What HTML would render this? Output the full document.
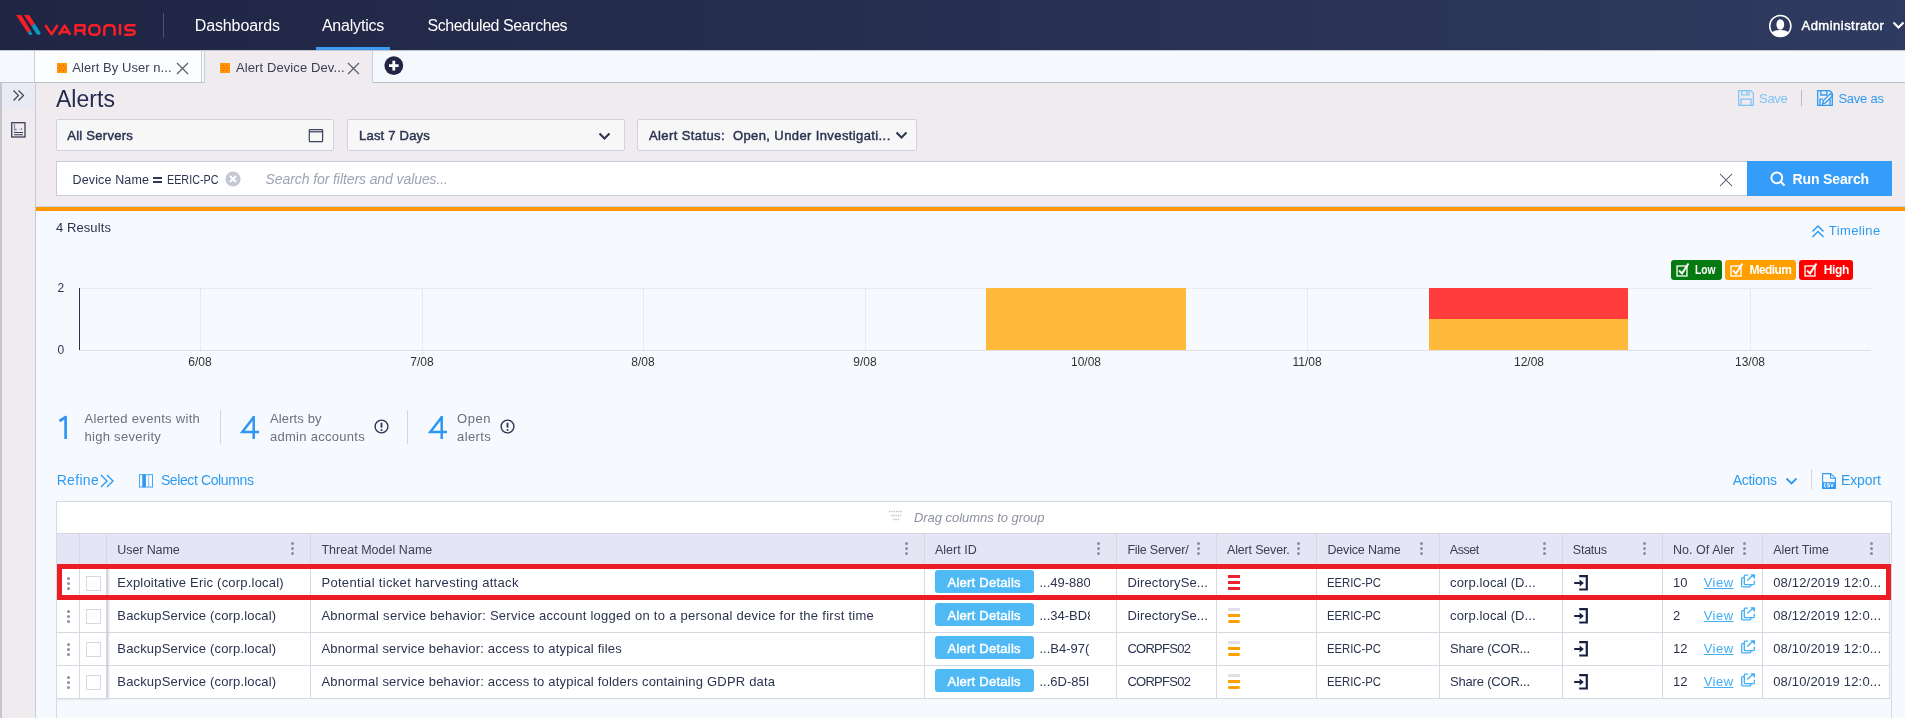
<!DOCTYPE html>
<html><head><meta charset="utf-8">
<style>
*{box-sizing:border-box;margin:0;padding:0}
html,body{width:1905px;height:718px;overflow:hidden;background:#efebef;font-family:"Liberation Sans",sans-serif;color:#2b3350;position:relative}
.a{position:absolute}
#root{position:absolute;left:0;top:0;width:1905px;height:718px;overflow:hidden;will-change:transform}
.t{white-space:nowrap;line-height:normal}
</style></head><body><div id="root">
<div class="a" style="left:0px;top:0px;width:1905px;height:50px;background:linear-gradient(90deg,#1f2543 0%,#2f3a60 100%)"></div>
<svg class="a" style="left:0;top:0" width="150" height="50" viewBox="0 0 150 50">
  <polygon points="16,15 21.2,15 30.2,29.8 28,33.2" fill="#fa1e26"/>
  <polygon points="28,33.2 30.2,29.8 32.4,34.8 29,34.8" fill="#0f97bd"/>
  <polygon points="24,15 29.2,15 34.5,23.2 31.7,26.5" fill="#fa1e26"/>
  <polygon points="31.7,26.5 34.5,23.2 40.3,32.3 40.2,34.8 37,34.8" fill="#0f97bd"/>
  <g fill="none" stroke="#fa1e26" stroke-width="2.5" stroke-linejoin="round">
    <path d="M45.3,25 L51.5,34.3 L57.7,25"/>
    <path d="M58.8,34.8 L64.6,25.6 L70.4,34.8 M60.3,32.1 H69"/>
    <path d="M75.5,35.6 V25.3 H84.5 V30.4 H75.5 M82.2,30.4 L85.2,35.4"/>
    <rect x="89.3" y="25.3" width="10.2" height="9.4" rx="3.6"/>
    <path d="M104.3,35.8 V29.5 Q104.3,25.3 108.3,25.3 H110.6 Q114.6,25.3 114.6,29.5 V35.8"/>
    <path d="M120,24 V35"/>
    <path d="M135.6,25.3 H128.6 Q125.4,25.3 125.4,27.9 Q125.4,30.3 128.6,30.3 H131.6 Q134.6,30.3 134.6,32.5 Q134.6,34.7 131.6,34.7 H124.3"/>
  </g>
</svg>
<div class="a" style="left:163px;top:13px;width:1px;height:25px;background:#4a5272"></div>
<div id="nav1" class="a t" style="left:194.7px;top:17px;font-size:16px;letter-spacing:-0.111px;color:#fff">Dashboards</div>
<div id="nav2" class="a t" style="left:321.9px;top:17px;font-size:16px;letter-spacing:-0.2px;color:#fff">Analytics</div>
<div class="a" style="left:316px;top:47px;width:74px;height:3px;background:#3a9bf0"></div>
<div id="nav3" class="a t" style="left:427.4px;top:17px;font-size:16px;letter-spacing:-0.437px;color:#fff">Scheduled Searches</div>
<svg class="a" style="left:1768px;top:14px" width="24" height="24" viewBox="0 0 24 24"><circle cx="12.3" cy="12" r="10.6" fill="none" stroke="#fff" stroke-width="1.5"/><ellipse cx="12.3" cy="10.5" rx="3.9" ry="5.2" fill="#fff"/><path d="M3.8 19.2 Q5.5 16 12.3 16 Q19.1 16 20.8 19.2 Q17.5 22.8 12.3 22.8 Q7.1 22.8 3.8 19.2Z" fill="#fff"/></svg>
<div id="admin" class="a t" style="left:1801.5px;top:18px;font-size:13px;letter-spacing:0.484px;color:#fff;-webkit-text-stroke:0.45px #fff">Administrator</div>
<svg class="a" style="left:1892px;top:21px" width="13" height="9" viewBox="0 0 13 9"><path d="M1.5 1.5 L6.5 6.5 L11.5 1.5" fill="none" stroke="#fff" stroke-width="2.2"/></svg>
<div class="a" style="left:0px;top:50px;width:1905px;height:33px;background:#f5f9fe;border-top:1px solid #c3c6cd;border-bottom:1px solid #bcc0ca"></div>
<div class="a" style="left:34px;top:51px;width:168px;height:32px;background:#fcfdff;border-left:1px solid #c9ced8;border-right:1px solid #c9ced8;border-bottom:1px solid #bcc0ca"></div>
<div class="a" style="left:204px;top:51px;width:169px;height:32px;background:#efebef;border-left:1px solid #c9ced8;border-right:1px solid #c9ced8"></div>
<svg class="a" style="left:57px;top:63px" width="10" height="10" viewBox="0 0 10 10"><rect width="10" height="10" fill="#ff9800"/><g fill="#e8323a"><circle cx="3" cy="2.5" r="0.6"/><circle cx="6.5" cy="2.5" r="0.6"/><circle cx="2" cy="5" r="0.6"/><circle cx="4.5" cy="5" r="0.6"/><circle cx="7.5" cy="5" r="0.6"/><circle cx="3" cy="7.5" r="0.6"/><circle cx="6.5" cy="7.5" r="0.6"/></g></svg>
<div id="tab1" class="a t" style="left:72.3px;top:60px;font-size:13px;letter-spacing:0.059px;color:#3a4058">Alert By User n...</div>
<svg class="a" style="left:176px;top:62px" width="13" height="13" viewBox="0 0 13 13"><path d="M1 1L12 12M12 1L1 12" stroke="#5a5f6e" stroke-width="1.2"/></svg>
<svg class="a" style="left:220px;top:63px" width="10" height="10" viewBox="0 0 10 10"><rect width="10" height="10" fill="#ff9800"/><g fill="#e8323a"><circle cx="3" cy="2.5" r="0.6"/><circle cx="6.5" cy="2.5" r="0.6"/><circle cx="2" cy="5" r="0.6"/><circle cx="4.5" cy="5" r="0.6"/><circle cx="7.5" cy="5" r="0.6"/><circle cx="3" cy="7.5" r="0.6"/><circle cx="6.5" cy="7.5" r="0.6"/></g></svg>
<div id="tab2" class="a t" style="left:235.9px;top:60px;font-size:13px;letter-spacing:0.111px;color:#3a4058">Alert Device Dev...</div>
<svg class="a" style="left:347px;top:62px" width="13" height="13" viewBox="0 0 13 13"><path d="M1 1L12 12M12 1L1 12" stroke="#5a5f6e" stroke-width="1.2"/></svg>
<svg class="a" style="left:384px;top:56px" width="20" height="20" viewBox="0 0 20 20"><circle cx="9.8" cy="9.6" r="9.4" fill="#1f2543"/><path d="M9.8 4.8V14.4M5 9.6H14.6" stroke="#fff" stroke-width="2.8"/></svg>
<div class="a" style="left:0px;top:83px;width:36px;height:635px;background:#efebef;border-right:1px solid #c6cad6"></div>
<div class="a" style="left:0px;top:83px;width:2px;height:635px;background:#c3c6cc"></div>
<div class="a" style="left:2px;top:83px;width:33px;height:27px;background:#e9eaf3"></div>
<svg class="a" style="left:12px;top:89px" width="14" height="14" viewBox="0 0 14 14"><path d="M1.5 1.5L6.5 6.5L1.5 11.5M6.5 1.5L11.5 6.5L6.5 11.5" fill="none" stroke="#3a4058" stroke-width="1.2"/></svg>
<svg class="a" style="left:11px;top:122px" width="15" height="16" viewBox="0 0 15 16"><rect x="0.7" y="0.7" width="13.3" height="14.3" fill="none" stroke="#3a4058" stroke-width="1.3"/><path d="M3.5 2V8H5V6.5 M8.5 7.5V8 M10.5 6V8" fill="none" stroke="#8a8e9a" stroke-width="1.2"/><path d="M3 10.5H12M3 12.8H12" stroke="#3a4058" stroke-width="1.1"/></svg>
<div id="title" class="a t" style="left:55.9px;top:86px;font-size:23px;letter-spacing:0.08px;color:#232c4d">Alerts</div>
<svg class="a" style="left:1738px;top:90px" width="16" height="16" viewBox="0 0 16 16"><path d="M0.7 0.7H12.8L15.3 3.2V15.3H0.7Z M3.8 0.7V5H11V0.7 M8.8 1.6V4 M3 15.3V9.2H13V15.3" fill="none" stroke="#7cc3f7" stroke-width="1.2"/></svg>
<div id="save" class="a t" style="left:1759px;top:91px;font-size:13px;letter-spacing:-0.267px;color:#7cc3f7">Save</div>
<div class="a" style="left:1801px;top:90px;width:1px;height:16px;background:#b9bcc6"></div>
<svg class="a" style="left:1817px;top:90px" width="17" height="16" viewBox="0 0 17 16"><path d="M0.7 0.7H12.8L15.3 3.2V15.3H0.7Z M3.8 0.7V5H9.8V0.7 M3 15.3V9.2H6 M13 8.5V15.3" fill="none" stroke="#2e9bf3" stroke-width="1.3"/><path d="M5.6 14.2 L6.4 10.6 L13.4 3.6 L15.6 5.8 L8.6 12.8 Z" fill="#efebef" stroke="#2e9bf3" stroke-width="1.3"/></svg>
<div id="saveas" class="a t" style="left:1838.4px;top:91px;font-size:13px;letter-spacing:-0.233px;color:#2e9bf3">Save as</div>
<div class="a" style="left:56px;top:119px;width:278px;height:32px;background:#f7f7f7;border:1px solid #cfd2dc;border-radius:2px"></div>
<div class="a" style="left:347px;top:119px;width:278px;height:32px;background:#f7f7f7;border:1px solid #cfd2dc;border-radius:2px"></div>
<div class="a" style="left:637px;top:119px;width:280px;height:32px;background:#f7f7f7;border:1px solid #cfd2dc;border-radius:2px"></div>
<div id="dd1" class="a t" style="left:67.2px;top:128px;font-size:13px;letter-spacing:0.28px;color:#2b3350;-webkit-text-stroke:0.45px #2b3350">All Servers</div>
<div id="dd2" class="a t" style="left:359px;top:128px;font-size:13px;letter-spacing:0.22px;color:#2b3350;-webkit-text-stroke:0.45px #2b3350">Last 7 Days</div>
<div id="dd3" class="a t" style="left:649px;top:128px;font-size:13px;letter-spacing:0.395px;color:#2b3350;-webkit-text-stroke:0.45px #2b3350">Alert Status:&nbsp; Open, Under Investigati...</div>
<svg class="a" style="left:308px;top:128px" width="16" height="15" viewBox="0 0 16 15"><rect x="1.3" y="1.7" width="13.3" height="12" rx="0.8" fill="none" stroke="#3a4260" stroke-width="1.2"/><line x1="1.5" y1="3.8" x2="14.5" y2="3.8" stroke="#1f2748" stroke-width="1.1"/></svg>
<svg class="a" style="left:598px;top:132px" width="13" height="9" viewBox="0 0 13 9"><path d="M1.5 1.5 L6.5 6.5 L11.5 1.5" fill="none" stroke="#2b3350" stroke-width="2"/></svg>
<svg class="a" style="left:895px;top:131px" width="13" height="9" viewBox="0 0 13 9"><path d="M1.5 1.5 L6.5 6.5 L11.5 1.5" fill="none" stroke="#2b3350" stroke-width="2"/></svg>
<div class="a" style="left:56px;top:161px;width:1692px;height:35px;background:#fff;border:1px solid #c9ccd8"></div>
<div id="tag1" class="a t" style="left:72.5px;top:173px;font-size:12.5px;letter-spacing:0.14px;color:#2b3350">Device Name</div>
<div class="a" style="left:152.5px;top:177.2px;width:9px;height:1.7px;background:#2f3756"></div>
<div class="a" style="left:152.5px;top:181.2px;width:9px;height:1.7px;background:#2f3756"></div>
<div id="tag2" class="a t" style="left:166.6px;top:173px;font-size:12.5px;letter-spacing:0px;transform:scaleX(0.862);transform-origin:0 0;color:#2b3350">EERIC-PC</div>
<svg class="a" style="left:225px;top:171px" width="16" height="16" viewBox="0 0 16 16"><circle cx="8" cy="8" r="7.6" fill="#c5c8d4"/><path d="M5 5L11 11M11 5L5 11" stroke="#fff" stroke-width="2"/></svg>
<div id="ph" class="a t" style="left:265.6px;top:171px;font-size:14px;letter-spacing:-0.091px;color:#9ea3b3;font-style:italic">Search for filters and values...</div>
<svg class="a" style="left:1719px;top:173px" width="14" height="14" viewBox="0 0 14 14"><path d="M1 1L13 13M13 1L1 13" stroke="#474d5e" stroke-width="1.05"/></svg>
<div class="a" style="left:1747px;top:161px;width:145px;height:35px;background:#349cf9"></div>
<svg class="a" style="left:1770px;top:171px" width="16" height="16" viewBox="0 0 16 16"><circle cx="6.8" cy="6.8" r="5.4" fill="none" stroke="#fff" stroke-width="2"/><path d="M10.5 10.5L14.5 14.5" stroke="#fff" stroke-width="2.2"/></svg>
<div id="run" class="a t" style="left:1792.5px;top:171px;font-size:14px;letter-spacing:-0.135px;color:#fff;font-weight:bold">Run Search</div>
<div class="a" style="left:36px;top:206px;width:1869px;height:1px;background:#cdd8ea"></div>
<div class="a" style="left:36px;top:207px;width:1869px;height:511px;background:#f6f9fd;border-top:4px solid #ff9800"></div>
<div id="res" class="a t" style="left:55.9px;top:220px;font-size:13px;letter-spacing:0.103px;color:#2b3350">4 Results</div>
<svg class="a" style="left:1811px;top:224px" width="14" height="14" viewBox="0 0 14 14"><path d="M1.5 7.5L7 2L12.5 7.5M1.5 13L7 7.5L12.5 13" fill="none" stroke="#2e9bf3" stroke-width="1.5"/></svg>
<div id="tl" class="a t" style="left:1828.8px;top:223px;font-size:13px;letter-spacing:0.398px;color:#2e9bf3">Timeline</div>
<div class="a" style="left:1671px;top:260px;width:51px;height:20px;background:#047a10;border-radius:3px"></div>
<svg class="a" style="left:1676px;top:262px" width="15" height="15" viewBox="0 0 15 15"><rect x="1" y="4" width="10" height="10" fill="none" stroke="#fff" stroke-width="1.3"/><path d="M3 8.5L6 11.5L12.5 1.5" fill="none" stroke="#fff" stroke-width="2"/></svg>
<div class="a" style="left:1725px;top:260px;width:71px;height:20px;background:#ff9f00;border-radius:3px"></div>
<svg class="a" style="left:1730px;top:262px" width="15" height="15" viewBox="0 0 15 15"><rect x="1" y="4" width="10" height="10" fill="none" stroke="#fff" stroke-width="1.3"/><path d="M3 8.5L6 11.5L12.5 1.5" fill="none" stroke="#fff" stroke-width="2"/></svg>
<div class="a" style="left:1799px;top:260px;width:54px;height:20px;background:#ff0000;border-radius:3px"></div>
<svg class="a" style="left:1804px;top:262px" width="15" height="15" viewBox="0 0 15 15"><rect x="1" y="4" width="10" height="10" fill="none" stroke="#fff" stroke-width="1.3"/><path d="M3 8.5L6 11.5L12.5 1.5" fill="none" stroke="#fff" stroke-width="2"/></svg>
<div id="low" class="a t" style="left:1695.2px;top:263px;font-size:12px;letter-spacing:0px;transform:scaleX(0.856);transform-origin:0 0;color:#fff;font-weight:bold">Low</div>
<div id="med" class="a t" style="left:1749.5px;top:263px;font-size:12px;letter-spacing:-0.6px;color:#fff;font-weight:bold">Medium</div>
<div id="high" class="a t" style="left:1823.7px;top:263px;font-size:12px;letter-spacing:-0.333px;color:#fff;font-weight:bold">High</div>
<div id="t21" class="a t" style="left:57.4px;top:281px;font-size:12px;letter-spacing:0px;color:#2b3350">2</div>
<div id="t22" class="a t" style="left:57.4px;top:343px;font-size:12px;letter-spacing:0px;color:#2b3350">0</div>
<div class="a" style="left:80px;top:288px;width:1791px;height:0px;border-top:1px dotted #dcdee4"></div>
<div class="a" style="left:200px;top:289px;width:0px;height:61px;border-left:1px dotted #d9dbe1"></div>
<div class="a" style="left:422px;top:289px;width:0px;height:61px;border-left:1px dotted #d9dbe1"></div>
<div class="a" style="left:643px;top:289px;width:0px;height:61px;border-left:1px dotted #d9dbe1"></div>
<div class="a" style="left:865px;top:289px;width:0px;height:61px;border-left:1px dotted #d9dbe1"></div>
<div class="a" style="left:1086px;top:289px;width:0px;height:61px;border-left:1px dotted #d9dbe1"></div>
<div class="a" style="left:1307px;top:289px;width:0px;height:61px;border-left:1px dotted #d9dbe1"></div>
<div class="a" style="left:1529px;top:289px;width:0px;height:61px;border-left:1px dotted #d9dbe1"></div>
<div class="a" style="left:1750px;top:289px;width:0px;height:61px;border-left:1px dotted #d9dbe1"></div>
<div class="a" style="left:79px;top:350px;width:1792px;height:1px;background:#e1dfe3"></div>
<div class="a" style="left:79px;top:288px;width:1px;height:62px;background:#2b3350"></div>
<div class="a" style="left:986px;top:288px;width:200px;height:62px;background:#ffb93b"></div>
<div class="a" style="left:1429px;top:288px;width:199px;height:31px;background:#ff3d3d"></div>
<div class="a" style="left:1429px;top:319px;width:199px;height:31px;background:#ffb93b"></div>
<div class="a t" style="left:170px;top:355px;width:60px;text-align:center;font-size:12px;color:#333">6/08</div>
<div class="a t" style="left:392px;top:355px;width:60px;text-align:center;font-size:12px;color:#333">7/08</div>
<div class="a t" style="left:613px;top:355px;width:60px;text-align:center;font-size:12px;color:#333">8/08</div>
<div class="a t" style="left:835px;top:355px;width:60px;text-align:center;font-size:12px;color:#333">9/08</div>
<div class="a t" style="left:1056px;top:355px;width:60px;text-align:center;font-size:12px;color:#333">10/08</div>
<div class="a t" style="left:1277px;top:355px;width:60px;text-align:center;font-size:12px;color:#333">11/08</div>
<div class="a t" style="left:1499px;top:355px;width:60px;text-align:center;font-size:12px;color:#333">12/08</div>
<div class="a t" style="left:1720px;top:355px;width:60px;text-align:center;font-size:12px;color:#333">13/08</div>
<svg class="a" style="left:50px;top:410px" width="30" height="34" viewBox="0 0 30 34"><path d="M15.6,6 V28.9 M16.2,6.6 L9.5,11" fill="none" stroke="#2e97f5" stroke-width="2.7"/></svg>
<div id="st1a" class="a t" style="left:84.6px;top:411px;font-size:13px;letter-spacing:0.3px;color:#6b7080">Alerted events with</div>
<div id="st1b" class="a t" style="left:84.6px;top:429px;font-size:13px;letter-spacing:0.268px;color:#6b7080">high severity</div>
<div class="a" style="left:220px;top:410px;width:1px;height:34px;background:#d5d7de"></div>
<svg class="a" style="left:236px;top:410px" width="30" height="34" viewBox="0 0 30 34"><path d="M18.2,6.5 L6.3,22 H23 M17.7,6 V28.9" fill="none" stroke="#2e97f5" stroke-width="2.5" stroke-linejoin="miter"/></svg>
<div id="st2a" class="a t" style="left:270px;top:411px;font-size:13px;letter-spacing:0.125px;color:#6b7080">Alerts by</div>
<div id="st2b" class="a t" style="left:270px;top:429px;font-size:13px;letter-spacing:0.276px;color:#6b7080">admin accounts</div>
<svg class="a" style="left:374px;top:419px" width="15" height="15" viewBox="0 0 15 15"><circle cx="7.5" cy="7.5" r="6.4" fill="none" stroke="#2b3350" stroke-width="1.4"/><path d="M7.5 3.8V8.6" stroke="#2b3350" stroke-width="1.8"/><circle cx="7.5" cy="10.9" r="1" fill="#2b3350"/></svg>
<div class="a" style="left:407px;top:410px;width:1px;height:34px;background:#d5d7de"></div>
<svg class="a" style="left:423.5px;top:410px" width="30" height="34" viewBox="0 0 30 34"><path d="M18.2,6.5 L6.3,22 H23 M17.7,6 V28.9" fill="none" stroke="#2e97f5" stroke-width="2.5" stroke-linejoin="miter"/></svg>
<div id="st3a" class="a t" style="left:457px;top:411px;font-size:13px;letter-spacing:0.534px;color:#6b7080">Open</div>
<div id="st3b" class="a t" style="left:457px;top:429px;font-size:13px;letter-spacing:0.4px;color:#6b7080">alerts</div>
<svg class="a" style="left:500px;top:419px" width="15" height="15" viewBox="0 0 15 15"><circle cx="7.5" cy="7.5" r="6.4" fill="none" stroke="#2b3350" stroke-width="1.4"/><path d="M7.5 3.8V8.6" stroke="#2b3350" stroke-width="1.8"/><circle cx="7.5" cy="10.9" r="1" fill="#2b3350"/></svg>
<div id="refine" class="a t" style="left:56.7px;top:472px;font-size:14px;letter-spacing:0.32px;color:#2e9bf3">Refine</div>
<svg class="a" style="left:100px;top:474px" width="15" height="14" viewBox="0 0 15 14"><path d="M1 1L7 7L1 13M7 1L13 7L7 13" fill="none" stroke="#2e9bf3" stroke-width="1.4"/></svg>
<svg class="a" style="left:138px;top:474px" width="16" height="14" viewBox="0 0 16 14"><rect x="1.5" y="0.6" width="13" height="12.5" fill="none" stroke="#45aaf5" stroke-width="1"/><rect x="4.3" y="0.6" width="3.6" height="12.5" fill="#2e95f5"/><path d="M10.6 1V13" stroke="#7cc0f7" stroke-width="0.9"/></svg>
<div id="selcol" class="a t" style="left:160.9px;top:472px;font-size:14px;letter-spacing:-0.385px;color:#2e9bf3">Select Columns</div>
<div id="actions" class="a t" style="left:1732.7px;top:472px;font-size:14px;letter-spacing:-0.266px;color:#2e9bf3">Actions</div>
<svg class="a" style="left:1785px;top:477px" width="13" height="9" viewBox="0 0 13 9"><path d="M1.5 1.5L6.5 6.5L11.5 1.5" fill="none" stroke="#2e9bf3" stroke-width="1.8"/></svg>
<div class="a" style="left:1811px;top:469px;width:1px;height:20px;background:#d5d7de"></div>
<svg class="a" style="left:1822px;top:473px" width="14" height="16" viewBox="0 0 14 16"><path d="M0.6 0.6H8.6L13.4 5.2V15.4H0.6Z M8.6 0.6V5.2H13.4" fill="none" stroke="#2e9bf3" stroke-width="1.1"/><rect x="0.6" y="9.2" width="12.8" height="6.2" fill="#2e9bf3"/><path d="M4.3 10.8H2.4V13.9H4.3 M7.7 10.8H5.4V12.3H7.5V13.9H5.3 M8.7 10.6L10 13.9L11.3 10.6" fill="none" stroke="#fff" stroke-width="0.9"/></svg>
<div id="export" class="a t" style="left:1840.9px;top:472px;font-size:14px;letter-spacing:-0.08px;color:#2e9bf3">Export</div>
<div class="a" style="left:56px;top:501px;width:1836px;height:217px;background:#f6f9fd;border:1px solid #d6d9e2;border-bottom:none"></div>
<div class="a" style="left:57px;top:502px;width:1834px;height:31px;background:#fff"></div>
<svg class="a" style="left:888px;top:510px" width="15" height="12" viewBox="0 0 15 12"><path d="M1 1.5H14M3 5.5H13M5 9.5H12" stroke="#c4c7d2" stroke-width="1.3" stroke-dasharray="1.5 0.8"/></svg>
<div id="drag" class="a t" style="left:914px;top:510px;font-size:13px;letter-spacing:-0.05px;color:#8c91a1;font-style:italic">Drag columns to group</div>
<div class="a" style="left:57px;top:533px;width:1833px;height:33px;background:#e6e5f6;border-top:1px solid #d6d9e2;border-bottom:1px solid #d6d9e2"></div>
<div class="a" style="left:57px;top:566px;width:1833px;height:132px;background:#fff"></div>
<div class="a" style="left:57px;top:599px;width:1833px;height:1px;background:#d6d9e2"></div>
<div class="a" style="left:57px;top:632px;width:1833px;height:1px;background:#d6d9e2"></div>
<div class="a" style="left:57px;top:665px;width:1833px;height:1px;background:#d6d9e2"></div>
<div class="a" style="left:57px;top:698px;width:1833px;height:1px;background:#d6d9e2"></div>
<div class="a" style="left:79px;top:534px;width:1px;height:164px;background:#d6d9e2"></div>
<div class="a" style="left:106px;top:534px;width:1px;height:164px;background:#d6d9e2"></div>
<div class="a" style="left:310px;top:534px;width:1px;height:164px;background:#d6d9e2"></div>
<div class="a" style="left:924px;top:534px;width:1px;height:164px;background:#d6d9e2"></div>
<div class="a" style="left:1116px;top:534px;width:1px;height:164px;background:#d6d9e2"></div>
<div class="a" style="left:1216px;top:534px;width:1px;height:164px;background:#d6d9e2"></div>
<div class="a" style="left:1316px;top:534px;width:1px;height:164px;background:#d6d9e2"></div>
<div class="a" style="left:1439px;top:534px;width:1px;height:164px;background:#d6d9e2"></div>
<div class="a" style="left:1562px;top:534px;width:1px;height:164px;background:#d6d9e2"></div>
<div class="a" style="left:1662px;top:534px;width:1px;height:164px;background:#d6d9e2"></div>
<div class="a" style="left:1762px;top:534px;width:1px;height:164px;background:#d6d9e2"></div>
<div class="a" style="left:1889px;top:534px;width:1px;height:164px;background:#d6d9e2"></div>
<div class="a" style="left:107px;top:566px;width:3px;height:132px;background:linear-gradient(90deg,#c9ccd6,rgba(255,255,255,0))"></div>
<div class="a" style="left:57px;top:698px;width:52px;height:3px;background:linear-gradient(180deg,#d9dbe3,rgba(246,249,253,0))"></div>
<div id="h0" class="a t" style="left:117.3px;top:543px;font-size:12.5px;letter-spacing:-0.097px;color:#3a4058">User Name</div>
<svg class="a" style="left:291px;top:542px" width="3" height="13" viewBox="0 0 3 13"><circle cx="1.5" cy="1.5" r="1.5" fill="#8a8e9a"/><circle cx="1.5" cy="6.5" r="1.5" fill="#8a8e9a"/><circle cx="1.5" cy="11.5" r="1.5" fill="#8a8e9a"/></svg>
<div id="h1" class="a t" style="left:321.4px;top:543px;font-size:12.5px;letter-spacing:0.026px;color:#3a4058">Threat Model Name</div>
<svg class="a" style="left:905px;top:542px" width="3" height="13" viewBox="0 0 3 13"><circle cx="1.5" cy="1.5" r="1.5" fill="#8a8e9a"/><circle cx="1.5" cy="6.5" r="1.5" fill="#8a8e9a"/><circle cx="1.5" cy="11.5" r="1.5" fill="#8a8e9a"/></svg>
<div id="h2" class="a t" style="left:935px;top:543px;font-size:12.5px;letter-spacing:0.0px;color:#3a4058">Alert ID</div>
<svg class="a" style="left:1097px;top:542px" width="3" height="13" viewBox="0 0 3 13"><circle cx="1.5" cy="1.5" r="1.5" fill="#8a8e9a"/><circle cx="1.5" cy="6.5" r="1.5" fill="#8a8e9a"/><circle cx="1.5" cy="11.5" r="1.5" fill="#8a8e9a"/></svg>
<div id="h3" class="a t" style="left:1127.4px;top:543px;font-size:12.5px;letter-spacing:-0.238px;color:#3a4058">File Server/</div>
<svg class="a" style="left:1197px;top:542px" width="3" height="13" viewBox="0 0 3 13"><circle cx="1.5" cy="1.5" r="1.5" fill="#8a8e9a"/><circle cx="1.5" cy="6.5" r="1.5" fill="#8a8e9a"/><circle cx="1.5" cy="11.5" r="1.5" fill="#8a8e9a"/></svg>
<div id="h4" class="a t" style="left:1227.1px;top:543px;font-size:12.5px;letter-spacing:-0.182px;color:#3a4058">Alert Sever.</div>
<svg class="a" style="left:1297px;top:542px" width="3" height="13" viewBox="0 0 3 13"><circle cx="1.5" cy="1.5" r="1.5" fill="#8a8e9a"/><circle cx="1.5" cy="6.5" r="1.5" fill="#8a8e9a"/><circle cx="1.5" cy="11.5" r="1.5" fill="#8a8e9a"/></svg>
<div id="h5" class="a t" style="left:1327.4px;top:543px;font-size:12.5px;letter-spacing:-0.16px;color:#3a4058">Device Name</div>
<svg class="a" style="left:1420px;top:542px" width="3" height="13" viewBox="0 0 3 13"><circle cx="1.5" cy="1.5" r="1.5" fill="#8a8e9a"/><circle cx="1.5" cy="6.5" r="1.5" fill="#8a8e9a"/><circle cx="1.5" cy="11.5" r="1.5" fill="#8a8e9a"/></svg>
<div id="h6" class="a t" style="left:1449.8px;top:543px;font-size:12.5px;letter-spacing:-0.45px;color:#3a4058">Asset</div>
<svg class="a" style="left:1543px;top:542px" width="3" height="13" viewBox="0 0 3 13"><circle cx="1.5" cy="1.5" r="1.5" fill="#8a8e9a"/><circle cx="1.5" cy="6.5" r="1.5" fill="#8a8e9a"/><circle cx="1.5" cy="11.5" r="1.5" fill="#8a8e9a"/></svg>
<div id="h7" class="a t" style="left:1572.8px;top:543px;font-size:12.5px;letter-spacing:-0.24px;color:#3a4058">Status</div>
<svg class="a" style="left:1643px;top:542px" width="3" height="13" viewBox="0 0 3 13"><circle cx="1.5" cy="1.5" r="1.5" fill="#8a8e9a"/><circle cx="1.5" cy="6.5" r="1.5" fill="#8a8e9a"/><circle cx="1.5" cy="11.5" r="1.5" fill="#8a8e9a"/></svg>
<div id="h8" class="a t" style="left:1673px;top:543px;font-size:12.5px;letter-spacing:0.04px;color:#3a4058">No. Of Aler</div>
<svg class="a" style="left:1743px;top:542px" width="3" height="13" viewBox="0 0 3 13"><circle cx="1.5" cy="1.5" r="1.5" fill="#8a8e9a"/><circle cx="1.5" cy="6.5" r="1.5" fill="#8a8e9a"/><circle cx="1.5" cy="11.5" r="1.5" fill="#8a8e9a"/></svg>
<div id="h9" class="a t" style="left:1773.2px;top:543px;font-size:12.5px;letter-spacing:-0.045px;color:#3a4058">Alert Time</div>
<svg class="a" style="left:1870px;top:542px" width="3" height="13" viewBox="0 0 3 13"><circle cx="1.5" cy="1.5" r="1.5" fill="#8a8e9a"/><circle cx="1.5" cy="6.5" r="1.5" fill="#8a8e9a"/><circle cx="1.5" cy="11.5" r="1.5" fill="#8a8e9a"/></svg>
<svg class="a" style="left:67px;top:577px" width="3" height="13" viewBox="0 0 3 13"><circle cx="1.5" cy="1.5" r="1.5" fill="#8a8e9a"/><circle cx="1.5" cy="6.5" r="1.5" fill="#8a8e9a"/><circle cx="1.5" cy="11.5" r="1.5" fill="#8a8e9a"/></svg>
<div class="a" style="left:86px;top:576px;width:15px;height:15px;border:1px solid #d6d9e2;background:#fff"></div>
<div id="u0" class="a t" style="left:117.3px;top:575px;font-size:13px;letter-spacing:0.207px;color:#2b3350">Exploitative Eric (corp.local)</div>
<div id="m0" class="a t" style="left:321.4px;top:575px;font-size:13px;letter-spacing:0.321px;color:#2b3350">Potential ticket harvesting attack</div>
<div class="a" style="left:935px;top:570px;width:99px;height:23px;background:#4fb9f5;border-radius:3px"></div>
<div id="ad0" class="a t" style="left:947.5px;top:575px;font-size:13px;letter-spacing:0.249px;color:#fff;-webkit-text-stroke:0.45px #fff">Alert Details</div>
<div class="a" style="left:1039px;top:566px;width:51px;height:33px;overflow:hidden"><div class="a t" style="left:0.5px;top:9px;font-size:13px;color:#2b3350;letter-spacing:0px">...49-880</div></div>
<div id="fs0" class="a t" style="left:1127.4px;top:575px;font-size:13px;letter-spacing:0.14px;color:#2b3350">DirectorySe...</div>
<svg class="a" style="left:1228px;top:575px" width="12" height="15" viewBox="0 0 12 15"><rect x="0" y="0" width="12" height="3" fill="#e8232b"/><rect x="0" y="6" width="12" height="3" fill="#e8232b"/><rect x="0" y="12" width="12" height="3" fill="#e8232b"/></svg>
<div id="dn0" class="a t" style="left:1327.4px;top:575px;font-size:13px;letter-spacing:0px;transform:scaleX(0.868);transform-origin:0 0;color:#2b3350">EERIC-PC</div>
<div id="as0" class="a t" style="left:1450.1px;top:575px;font-size:13px;letter-spacing:0.119px;color:#2b3350">corp.local (D...</div>
<svg class="a" style="left:1574px;top:575px" width="15" height="16" viewBox="0 0 15 16"><path d="M5.2 1.2H12.8V14.5H5.2" fill="none" stroke="#1a2040" stroke-width="2.2"/><path d="M0.2 8H7" stroke="#1a2040" stroke-width="2"/><path d="M5.6 4.5L9.8 8L5.6 11.5Z" fill="#1a2040"/></svg>
<div id="no0" class="a t" style="left:1673px;top:575px;font-size:13px;letter-spacing:0px;color:#2b3350">10</div>
<div id="v0" class="a t" style="left:1703.7px;top:575px;font-size:13px;letter-spacing:0.468px;color:#41aef5;text-decoration:underline">View</div>
<svg class="a" style="left:1741px;top:574px" width="15" height="15" viewBox="0 0 15 15"><g fill="none" stroke="#41aef5" stroke-width="1.3"><path d="M3.2,3.7 H1.5 Q0.7,3.7 0.7,4.5 V12 Q0.7,12.8 1.5,12.8 H9 Q9.8,12.8 9.8,12 V10.8"/><path d="M7,1.2 H4.1 Q3.3,1.2 3.3,2 V9.8 Q3.3,10.6 4.1,10.6 H12.5 Q13.3,10.6 13.3,9.8 V6.8"/><path d="M6.3,6.5 L12,1"/></g><path d="M9.3,0.3 H14 V5 Z" fill="#41aef5"/></svg>
<div id="at0" class="a t" style="left:1773.2px;top:575px;font-size:13px;letter-spacing:0.177px;color:#2b3350">08/12/2019 12:0...</div>
<svg class="a" style="left:67px;top:610px" width="3" height="13" viewBox="0 0 3 13"><circle cx="1.5" cy="1.5" r="1.5" fill="#8a8e9a"/><circle cx="1.5" cy="6.5" r="1.5" fill="#8a8e9a"/><circle cx="1.5" cy="11.5" r="1.5" fill="#8a8e9a"/></svg>
<div class="a" style="left:86px;top:609px;width:15px;height:15px;border:1px solid #d6d9e2;background:#fff"></div>
<div id="u1" class="a t" style="left:117.3px;top:608px;font-size:13px;letter-spacing:0.168px;color:#2b3350">BackupService (corp.local)</div>
<div id="m1" class="a t" style="left:321.4px;top:608px;font-size:13px;letter-spacing:0.274px;color:#2b3350">Abnormal service behavior: Service account logged on to a personal device for the first time</div>
<div class="a" style="left:935px;top:603px;width:99px;height:23px;background:#4fb9f5;border-radius:3px"></div>
<div id="ad1" class="a t" style="left:947.5px;top:608px;font-size:13px;letter-spacing:0.249px;color:#fff;-webkit-text-stroke:0.45px #fff">Alert Details</div>
<div class="a" style="left:1039px;top:599px;width:51px;height:33px;overflow:hidden"><div class="a t" style="left:0.5px;top:9px;font-size:13px;color:#2b3350;letter-spacing:0px">...34-BD8</div></div>
<div id="fs1" class="a t" style="left:1127.4px;top:608px;font-size:13px;letter-spacing:0.14px;color:#2b3350">DirectorySe...</div>
<svg class="a" style="left:1228px;top:608px" width="12" height="15" viewBox="0 0 12 15"><rect x="0" y="0" width="12" height="3" fill="#dfe0e8"/><rect x="0" y="6" width="12" height="3" fill="#ff9f00"/><rect x="0" y="12" width="12" height="3" rx="1.5" fill="#ff9f00"/></svg>
<div id="dn1" class="a t" style="left:1327.4px;top:608px;font-size:13px;letter-spacing:0px;transform:scaleX(0.868);transform-origin:0 0;color:#2b3350">EERIC-PC</div>
<div id="as1" class="a t" style="left:1450.1px;top:608px;font-size:13px;letter-spacing:0.119px;color:#2b3350">corp.local (D...</div>
<svg class="a" style="left:1574px;top:608px" width="15" height="16" viewBox="0 0 15 16"><path d="M5.2 1.2H12.8V14.5H5.2" fill="none" stroke="#1a2040" stroke-width="2.2"/><path d="M0.2 8H7" stroke="#1a2040" stroke-width="2"/><path d="M5.6 4.5L9.8 8L5.6 11.5Z" fill="#1a2040"/></svg>
<div id="no1" class="a t" style="left:1673px;top:608px;font-size:13px;letter-spacing:0px;color:#2b3350">2</div>
<div id="v1" class="a t" style="left:1703.7px;top:608px;font-size:13px;letter-spacing:0.468px;color:#41aef5;text-decoration:underline">View</div>
<svg class="a" style="left:1741px;top:607px" width="15" height="15" viewBox="0 0 15 15"><g fill="none" stroke="#41aef5" stroke-width="1.3"><path d="M3.2,3.7 H1.5 Q0.7,3.7 0.7,4.5 V12 Q0.7,12.8 1.5,12.8 H9 Q9.8,12.8 9.8,12 V10.8"/><path d="M7,1.2 H4.1 Q3.3,1.2 3.3,2 V9.8 Q3.3,10.6 4.1,10.6 H12.5 Q13.3,10.6 13.3,9.8 V6.8"/><path d="M6.3,6.5 L12,1"/></g><path d="M9.3,0.3 H14 V5 Z" fill="#41aef5"/></svg>
<div id="at1" class="a t" style="left:1773.2px;top:608px;font-size:13px;letter-spacing:0.177px;color:#2b3350">08/12/2019 12:0...</div>
<svg class="a" style="left:67px;top:643px" width="3" height="13" viewBox="0 0 3 13"><circle cx="1.5" cy="1.5" r="1.5" fill="#8a8e9a"/><circle cx="1.5" cy="6.5" r="1.5" fill="#8a8e9a"/><circle cx="1.5" cy="11.5" r="1.5" fill="#8a8e9a"/></svg>
<div class="a" style="left:86px;top:642px;width:15px;height:15px;border:1px solid #d6d9e2;background:#fff"></div>
<div id="u2" class="a t" style="left:117.3px;top:641px;font-size:13px;letter-spacing:0.168px;color:#2b3350">BackupService (corp.local)</div>
<div id="m2" class="a t" style="left:321.4px;top:641px;font-size:13px;letter-spacing:0.196px;color:#2b3350">Abnormal service behavior: access to atypical files</div>
<div class="a" style="left:935px;top:636px;width:99px;height:23px;background:#4fb9f5;border-radius:3px"></div>
<div id="ad2" class="a t" style="left:947.5px;top:641px;font-size:13px;letter-spacing:0.249px;color:#fff;-webkit-text-stroke:0.45px #fff">Alert Details</div>
<div class="a" style="left:1039px;top:632px;width:51px;height:33px;overflow:hidden"><div class="a t" style="left:0.5px;top:9px;font-size:13px;color:#2b3350;letter-spacing:0px">...B4-97(</div></div>
<div id="fs2" class="a t" style="left:1127.4px;top:641px;font-size:13px;letter-spacing:-0.73px;color:#2b3350">CORPFS02</div>
<svg class="a" style="left:1228px;top:641px" width="12" height="15" viewBox="0 0 12 15"><rect x="0" y="0" width="12" height="3" fill="#dfe0e8"/><rect x="0" y="6" width="12" height="3" fill="#ff9f00"/><rect x="0" y="12" width="12" height="3" rx="1.5" fill="#ff9f00"/></svg>
<div id="dn2" class="a t" style="left:1327.4px;top:641px;font-size:13px;letter-spacing:0px;transform:scaleX(0.868);transform-origin:0 0;color:#2b3350">EERIC-PC</div>
<div id="as2" class="a t" style="left:1450.1px;top:641px;font-size:13px;letter-spacing:-0.201px;color:#2b3350">Share (COR...</div>
<svg class="a" style="left:1574px;top:641px" width="15" height="16" viewBox="0 0 15 16"><path d="M5.2 1.2H12.8V14.5H5.2" fill="none" stroke="#1a2040" stroke-width="2.2"/><path d="M0.2 8H7" stroke="#1a2040" stroke-width="2"/><path d="M5.6 4.5L9.8 8L5.6 11.5Z" fill="#1a2040"/></svg>
<div id="no2" class="a t" style="left:1673px;top:641px;font-size:13px;letter-spacing:0px;color:#2b3350">12</div>
<div id="v2" class="a t" style="left:1703.7px;top:641px;font-size:13px;letter-spacing:0.468px;color:#41aef5;text-decoration:underline">View</div>
<svg class="a" style="left:1741px;top:640px" width="15" height="15" viewBox="0 0 15 15"><g fill="none" stroke="#41aef5" stroke-width="1.3"><path d="M3.2,3.7 H1.5 Q0.7,3.7 0.7,4.5 V12 Q0.7,12.8 1.5,12.8 H9 Q9.8,12.8 9.8,12 V10.8"/><path d="M7,1.2 H4.1 Q3.3,1.2 3.3,2 V9.8 Q3.3,10.6 4.1,10.6 H12.5 Q13.3,10.6 13.3,9.8 V6.8"/><path d="M6.3,6.5 L12,1"/></g><path d="M9.3,0.3 H14 V5 Z" fill="#41aef5"/></svg>
<div id="at2" class="a t" style="left:1773.2px;top:641px;font-size:13px;letter-spacing:0.177px;color:#2b3350">08/10/2019 12:0...</div>
<svg class="a" style="left:67px;top:676px" width="3" height="13" viewBox="0 0 3 13"><circle cx="1.5" cy="1.5" r="1.5" fill="#8a8e9a"/><circle cx="1.5" cy="6.5" r="1.5" fill="#8a8e9a"/><circle cx="1.5" cy="11.5" r="1.5" fill="#8a8e9a"/></svg>
<div class="a" style="left:86px;top:675px;width:15px;height:15px;border:1px solid #d6d9e2;background:#fff"></div>
<div id="u3" class="a t" style="left:117.3px;top:674px;font-size:13px;letter-spacing:0.168px;color:#2b3350">BackupService (corp.local)</div>
<div id="m3" class="a t" style="left:321.4px;top:674px;font-size:13px;letter-spacing:0.196px;color:#2b3350">Abnormal service behavior: access to atypical folders containing GDPR data</div>
<div class="a" style="left:935px;top:669px;width:99px;height:23px;background:#4fb9f5;border-radius:3px"></div>
<div id="ad3" class="a t" style="left:947.5px;top:674px;font-size:13px;letter-spacing:0.249px;color:#fff;-webkit-text-stroke:0.45px #fff">Alert Details</div>
<div class="a" style="left:1039px;top:665px;width:51px;height:33px;overflow:hidden"><div class="a t" style="left:0.5px;top:9px;font-size:13px;color:#2b3350;letter-spacing:0px">...6D-85I</div></div>
<div id="fs3" class="a t" style="left:1127.4px;top:674px;font-size:13px;letter-spacing:-0.73px;color:#2b3350">CORPFS02</div>
<svg class="a" style="left:1228px;top:674px" width="12" height="15" viewBox="0 0 12 15"><rect x="0" y="0" width="12" height="3" fill="#dfe0e8"/><rect x="0" y="6" width="12" height="3" fill="#ff9f00"/><rect x="0" y="12" width="12" height="3" rx="1.5" fill="#ff9f00"/></svg>
<div id="dn3" class="a t" style="left:1327.4px;top:674px;font-size:13px;letter-spacing:0px;transform:scaleX(0.868);transform-origin:0 0;color:#2b3350">EERIC-PC</div>
<div id="as3" class="a t" style="left:1450.1px;top:674px;font-size:13px;letter-spacing:-0.201px;color:#2b3350">Share (COR...</div>
<svg class="a" style="left:1574px;top:674px" width="15" height="16" viewBox="0 0 15 16"><path d="M5.2 1.2H12.8V14.5H5.2" fill="none" stroke="#1a2040" stroke-width="2.2"/><path d="M0.2 8H7" stroke="#1a2040" stroke-width="2"/><path d="M5.6 4.5L9.8 8L5.6 11.5Z" fill="#1a2040"/></svg>
<div id="no3" class="a t" style="left:1673px;top:674px;font-size:13px;letter-spacing:0px;color:#2b3350">12</div>
<div id="v3" class="a t" style="left:1703.7px;top:674px;font-size:13px;letter-spacing:0.468px;color:#41aef5;text-decoration:underline">View</div>
<svg class="a" style="left:1741px;top:673px" width="15" height="15" viewBox="0 0 15 15"><g fill="none" stroke="#41aef5" stroke-width="1.3"><path d="M3.2,3.7 H1.5 Q0.7,3.7 0.7,4.5 V12 Q0.7,12.8 1.5,12.8 H9 Q9.8,12.8 9.8,12 V10.8"/><path d="M7,1.2 H4.1 Q3.3,1.2 3.3,2 V9.8 Q3.3,10.6 4.1,10.6 H12.5 Q13.3,10.6 13.3,9.8 V6.8"/><path d="M6.3,6.5 L12,1"/></g><path d="M9.3,0.3 H14 V5 Z" fill="#41aef5"/></svg>
<div id="at3" class="a t" style="left:1773.2px;top:674px;font-size:13px;letter-spacing:0.177px;color:#2b3350">08/10/2019 12:0...</div>
<div class="a" style="left:57px;top:564px;width:1834px;height:36px;border:5px solid #ec1c24"></div>
</div></body></html>
